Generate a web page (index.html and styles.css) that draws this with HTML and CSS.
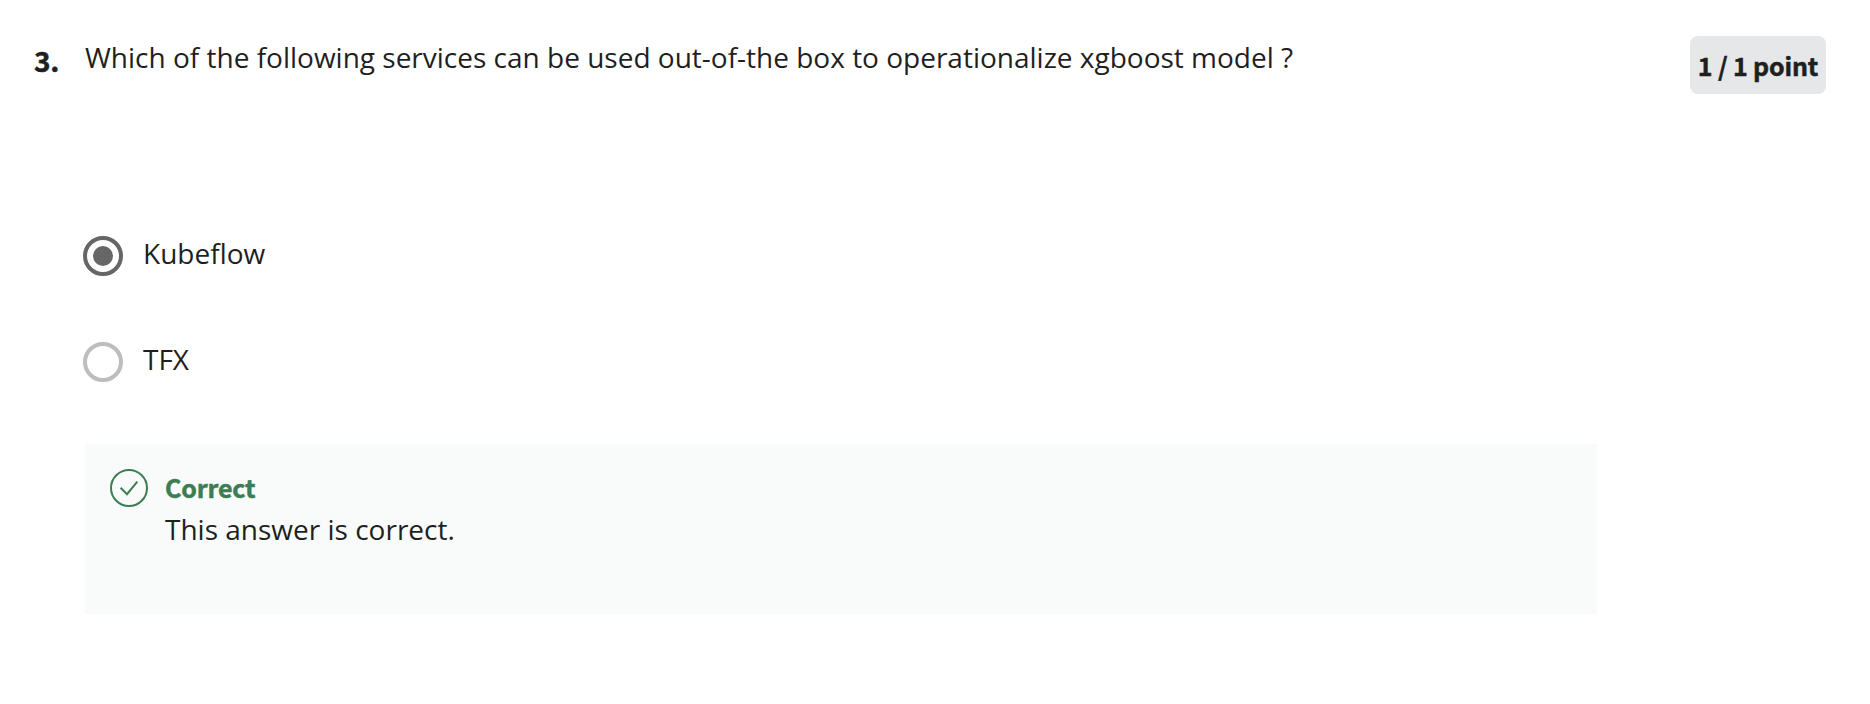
FILE: index.html
```html
<!DOCTYPE html>
<html lang="en">
<head>
<meta charset="utf-8">
<title>Quiz question</title>
<link rel="stylesheet" href="styles.css">
</head>
<body>
<main class="question">
  <div class="number strong">3.</div>
  <div class="content">
    <p class="prompt">Which of the following services can be used out-of-the box to operationalize xgboost model ?</p>
    <div class="options">
      <div class="option"><span class="radio checked"></span><span class="label">Kubeflow</span></div>
      <div class="option"><span class="radio"></span><span class="label">TFX</span></div>
    </div>
    <section class="feedback">
      <svg class="check" width="38" height="38" viewBox="0 0 38 38" fill="none" stroke="#3d7d54">
        <circle cx="19" cy="19" r="18" stroke-width="2"/>
        <path d="M10.6 18.8 17 25.2 27.3 12.6" stroke-width="2"/>
      </svg>
      <div>
        <div class="verdict strong">Correct</div>
        <div class="explain">This answer is correct.</div>
      </div>
    </section>
  </div>
  <div class="points strong">1 / 1 point</div>
</main>
</body>
</html>
```
FILE: styles.css
```css
* { box-sizing: border-box; }
body {
  margin: 0;
  background: #fff;
  color: #1f1f1f;
  font: 28px/42px "Open Sans", sans-serif;
}
.question {
  display: flex;
  align-items: flex-start;
  height: 704px;
  padding: 36px 44px 0 34px;
}
.strong {
  font-family: "Noto Sans CJK SC", sans-serif;
  font-weight: 700;
  font-size: 25px;
  letter-spacing: -0.15px;
  -webkit-text-stroke: 0.5px currentColor;
}
.number { width: 51px; padding-top: 3px; font-size: 28px; }
.content { width: 1512px; }
.prompt { margin: 0; white-space: nowrap; }
.options {
  display: flex;
  flex-direction: column;
  gap: 64px;
  margin: 154px 0 64px -2px;
}
.option { display: flex; gap: 20px; height: 42px; }
.radio {
  display: grid;
  place-items: center;
  width: 40px;
  height: 40px;
  margin-top: 4px;
  border: 4px solid #bdbdbd;
  border-radius: 50%;
}
.radio.checked { border-color: #666; }
.radio.checked::before {
  content: "";
  width: 20px;
  height: 20px;
  border-radius: 50%;
  background: #666;
}
.feedback {
  display: flex;
  gap: 17px;
  height: 170px;
  padding: 22px 25px;
  background: #f8fbfa;
}
.check { margin-top: 3px; }
.verdict { color: #3d7d54; }
.points {
  width: 136px;
  height: 58px;
  margin-left: auto;
  padding-top: 8px;
  border-radius: 8px;
  background: #e5e7e8;
  text-align: center;
  white-space: nowrap;
}
```
